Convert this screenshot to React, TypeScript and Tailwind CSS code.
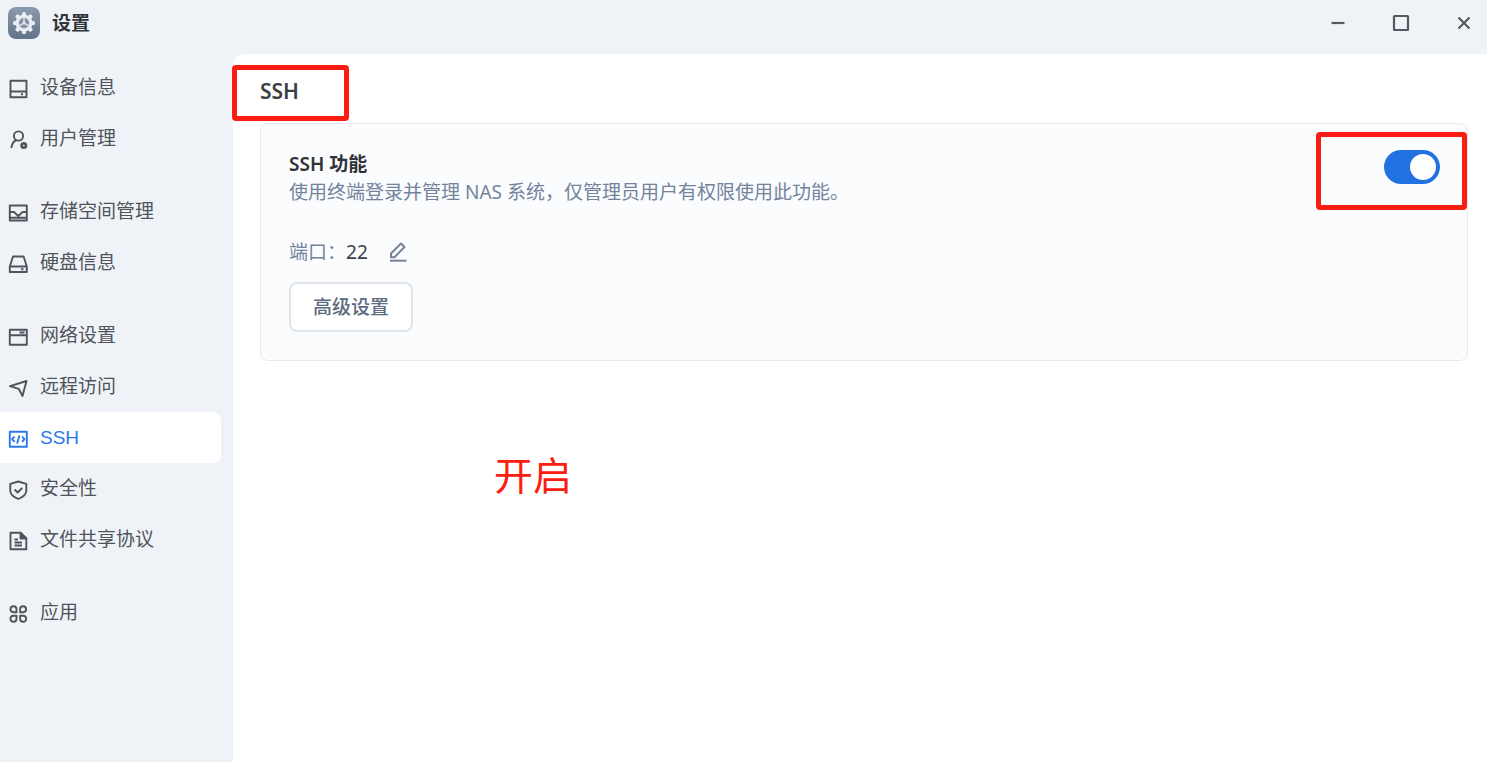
import { useState } from "react";
import type { ReactNode } from "react";

type NavItem = { id: string; label: string; icon: ReactNode };

const navGroups: NavItem[][] = [
  [
    {
      id: "device",
      label: "设备信息",
      icon: (
        <>
          <path d="M2.500 1.800h16v16.400h-16z" />
          <path d="M2.500 12.500h16M13 15.300h2" />
        </>
      ),
    },
    {
      id: "users",
      label: "用户管理",
      icon: (
        <>
          <circle cx="10.500" cy="6" r="4.600" />
          <path d="M8 10.200c-2.600 1.400-4.200 4-4.600 7.800" />
          <circle cx="15.800" cy="15.500" r="2.600" fill="currentColor" />
          <circle cx="15.800" cy="15.500" r="0.500" stroke="#eff3f8" strokeWidth="1" />
        </>
      ),
    },
  ],
  [
    {
      id: "storage",
      label: "存储空间管理",
      icon: (
        <>
          <path d="M1.800 2.500h17v15h-17z" />
          <path d="M1.800 9h4.200l4.300 4 4.300-4h4.200M1.800 14.800h17" />
        </>
      ),
    },
    {
      id: "disk",
      label: "硬盘信息",
      icon: (
        <>
          <path d="M5 2.500h10.600l3.200 10v5.500h-17v-5.500z" />
          <path d="M1.800 12.500h17M13 15.300h2.500" />
        </>
      ),
    },
  ],
  [
    {
      id: "network",
      label: "网络设置",
      icon: (
        <>
          <path d="M1.800 2.800h17v15h-17z" />
          <path d="M1.800 8.300h17M11.500 5.500h5" />
        </>
      ),
    },
    {
      id: "remote",
      label: "远程访问",
      icon: <path d="M2 8.200 18.500 3l-4 15-3.800-7.200z" />,
    },
    {
      id: "ssh",
      label: "SSH",
      icon: (
        <>
          <path d="M1.800 2.800h17v15h-17z" />
          <path d="M6.500 7.500 4.200 10.200l2.300 2.700M14.100 7.500l2.300 2.700-2.300 2.700M11.500 6.500l-2.400 8" />
        </>
      ),
    },
    {
      id: "security",
      label: "安全性",
      icon: (
        <>
          <path d="M10.300 1.500 18.300 3.800v7.200c0 3.500-3.500 6-8 8-4.500-2-8-4.500-8-8V3.800z" />
          <path d="m6.600 9.500 3 3 4.700-4.700" />
        </>
      ),
    },
    {
      id: "share",
      label: "文件共享协议",
      icon: (
        <>
          <path d="M2.500 1.800h10.300l5.500 5.500v11H2.500z" />
          <path d="M12.500 1.800v5.700h5.700z" fill="currentColor" />
          <path d="M6.500 8.500h3.500M6.500 11.500h7.500M6.500 14.500h7.500" />
        </>
      ),
    },
  ],
  [
    {
      id: "apps",
      label: "应用",
      icon: (
        <path d="M8.500 8.200h-3.200a3 3 0 1 1 3.200-3zM12.100 8.200h3.200a3 3 0 1 0-3.200-3zM8.500 11.800h-3.200a3 3 0 1 0 3.200 3zM12.100 11.800h3.200a3 3 0 1 1-3.200 3z" />
      ),
    },
  ],
];

function AppIcon() {
  return (
    <span className="flex size-8 items-center justify-center rounded-lg bg-linear-to-b from-[#8b9bad] to-[#63748a]">
      <svg viewBox="0 0 24 24" className="size-6" aria-hidden="true">
        <g fill="#e9edf2">
          {[0, 45, 90, 135].map((angle) => (
            <rect key={angle} x="10" y="1" width="4" height="22" rx="1.500" transform={`rotate(${angle} 12 12)`} />
          ))}
          <circle cx="12" cy="12" r="8.600" />
        </g>
        <circle cx="12" cy="12" r="5.200" fill="#8493a5" />
        <path d="M12 12V6.800M12 12l4.500 2.600M12 12l-4.500 2.600" stroke="#dfe4ea" strokeWidth="1.400" />
        <circle cx="12" cy="12" r="1.600" fill="#dfe4ea" />
      </svg>
    </span>
  );
}

function WindowButton({ label, children }: { label: string; children: ReactNode }) {
  return (
    <button type="button" aria-label={label} className="flex size-5 items-center justify-center text-[#55595f]">
      <svg viewBox="0 0 20 20" className="size-5" fill="none" stroke="currentColor" strokeWidth="2.200" aria-hidden="true">
        {children}
      </svg>
    </button>
  );
}

export default function App() {
  const [active, setActive] = useState("ssh");
  const [enabled, setEnabled] = useState(true);

  return (
    <div className="flex min-h-screen flex-col bg-[#eff3f8] font-['Noto_Sans','Noto_Sans_CJK_SC',sans-serif] text-[19px] leading-7 text-[#3c4046]">
      <header className="flex h-[54px] items-center justify-between pr-[13px] pb-2 pl-2">
        <div className="flex items-center gap-3">
          <AppIcon />
          <h1 className="font-semibold text-[#303338]">设置</h1>
        </div>
        <div className="flex gap-[43px]">
          <WindowButton label="最小化">
            <path d="M3.500 10h13" />
          </WindowButton>
          <WindowButton label="最大化">
            <rect x="3" y="3" width="14" height="14" rx="0.500" />
          </WindowButton>
          <WindowButton label="关闭">
            <path d="m4.500 4.500 11 11m0-11-11 11" />
          </WindowButton>
        </div>
      </header>

      <div className="flex flex-1">
        <nav
          aria-label="设置"
          className="flex w-[233px] shrink-0 flex-col gap-[22px] pt-2 pr-3 font-['Liberation_Sans','Noto_Sans_CJK_SC',sans-serif]"
        >
          {navGroups.map((group) => (
            <ul key={group[0].id}>
              {group.map((item) => (
                <li key={item.id}>
                  <a
                    href={`#${item.id}`}
                    onClick={() => setActive(item.id)}
                    aria-current={active === item.id ? "page" : undefined}
                    className={
                      active === item.id
                        ? "flex h-[51px] items-center gap-3 rounded-r-lg bg-white pl-2 text-[#2b78ec]"
                        : "flex h-[51px] items-center gap-3 pl-2 text-[#50545a]"
                    }
                  >
                    <svg
                      viewBox="0 0 20 20"
                      className="mt-0.5 size-5 shrink-0"
                      fill="none"
                      stroke="currentColor"
                      strokeWidth="1.900"
                      strokeLinejoin="round"
                      aria-hidden="true"
                    >
                      {item.icon}
                    </svg>
                    <span>{item.label}</span>
                  </a>
                </li>
              ))}
            </ul>
          ))}
        </nav>

        <main className="relative flex-1 rounded-tl-xl bg-white pr-[19px] pl-[27px]">
          <h2 className="flex h-[69px] items-center pt-1 text-[21px] font-semibold">SSH</h2>
          <div className="pointer-events-none absolute top-[11px] -left-px h-14 w-[117px] rounded-sm border-[5px] border-[#fb1d12]" />

          <section className="relative flex items-start justify-between rounded-lg border border-[#e6eaf0] bg-[#fafcfe] pt-[26px] pr-[27px] pb-7 pl-7">
            <div>
              <h3 className="font-semibold text-[#303338]">SSH 功能</h3>
              <p className="text-[#74839b]">使用终端登录并管理 NAS 系统，仅管理员用户有权限使用此功能。</p>
              <div className="mt-8 flex items-center">
                <span className="text-[#74839b]">端口：</span>
                <span>22</span>
                <button type="button" aria-label="编辑端口" className="ml-5 text-[#74839b]">
                  <svg viewBox="0 0 20 20" className="size-5" fill="none" stroke="currentColor" strokeWidth="2" strokeLinejoin="round" aria-hidden="true">
                    <path d="M3 15.200v-3.700L13 1.500l3.500 3.500L6.500 15.200z" />
                    <path d="M2 18.700h16.500" />
                  </svg>
                </button>
              </div>
              <button
                type="button"
                className="mt-4 flex h-[50px] items-center rounded-lg border-2 border-[#dfe4ed] bg-white px-[22px] font-medium text-[#5d6b80]"
              >
                高级设置
              </button>
            </div>
            <label className="flex cursor-pointer">
              <input
                type="checkbox"
                role="switch"
                aria-label="SSH 功能"
                checked={enabled}
                onChange={(event) => setEnabled(event.target.checked)}
                className="peer sr-only"
              />
              <span className="flex h-[34px] w-14 items-center rounded-full bg-[#c3cad4] px-1 peer-checked:justify-end peer-checked:bg-[#2172e0]">
                <span className="size-[26px] rounded-full bg-white" />
              </span>
            </label>
            <div className="pointer-events-none absolute top-2 right-0 h-[78px] w-[151px] rounded-sm border-[5px] border-[#fb1d12]" />
          </section>

          <p className="absolute top-[399px] left-[261px] text-[39px] leading-[44px] text-[#fb1d12]">开启</p>
        </main>
      </div>
    </div>
  );
}
